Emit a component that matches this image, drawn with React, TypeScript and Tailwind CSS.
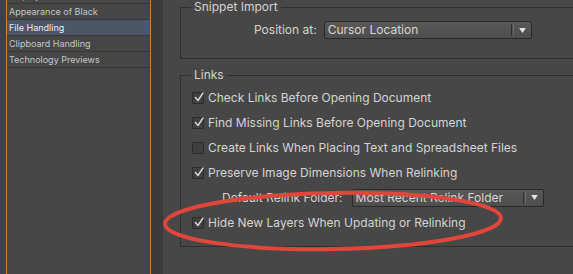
import { ReactElement } from 'react'

const SIDEBAR_ITEMS = [
    { label: 'Display Performance', active: false },
    { label: 'Appearance of Black', active: false },
    { label: 'File Handling', active: true },
    { label: 'Clipboard Handling', active: false },
    { label: 'Technology Previews', active: false },
]

const LINK_OPTIONS = [
    { label: 'Check Links Before Opening Document', checked: true },
    { label: 'Find Missing Links Before Opening Document', checked: true },
    { label: 'Create Links When Placing Text and Spreadsheet Files', checked: false },
    { label: 'Preserve Image Dimensions When Relinking', checked: true },
]

function Checkbox({ checked }: { checked: boolean }): ReactElement {
    return (
        <span className="relative flex h-[12px] w-[12px] shrink-0 rounded-[1px] border border-[#2c2c2c] bg-[#3f3f3f]">
            {checked && (
                <svg viewBox="0 0 12 12" className="absolute -top-[2px] left-[0px] h-[12px] w-[12px]">
                    <path d="M2.5 6.5 L5 9.5 L10 2" fill="none" stroke="#d6d6d6" strokeWidth="1.5" strokeLinecap="round" strokeLinejoin="round" />
                </svg>
            )}
        </span>
    )
}

function Dropdown({ value, width }: { value: string; width: string }): ReactElement {
    return (
        <div className={`flex h-[18px] items-center rounded-[2px] border border-[#2a2a2a] bg-gradient-to-b from-[#585858] to-[#4e4e4e] ${width}`}>
            <span className="flex-1 whitespace-nowrap pl-[3px] text-[12px] leading-[16px] text-[#d6d6d6]">{value}</span>
            <span className="h-[12px] w-[1px] bg-[#2e2e2e]" />
            <span className="ml-[1px] h-[12px] w-[1px] bg-[#6a6a6a]" />
            <svg viewBox="0 0 8 6" className="mx-[5px] h-[5px] w-[7px]">
                <path d="M0 0 L8 0 L4 6 Z" fill="#e6e6e6" />
            </svg>
        </div>
    )
}

export default function App(): ReactElement {
    return (
        <div className="relative flex h-[274px] w-[573px] overflow-hidden bg-[#474747] font-['Inter',sans-serif]">
            <div className="w-[6px] shrink-0 bg-[#414141]" />
            <div className="w-[145px] shrink-0 overflow-hidden border-x border-[#c8823a] bg-[#464646]">
                <ul className="-mt-[12px]">
                    {SIDEBAR_ITEMS.map((item) => (
                        <li
                            key={item.label}
                            className={`flex h-[16px] items-center border-b border-[#373737] pl-[2px] text-[9px] ${
                                item.active ? 'bg-[#4b5667] text-[#ececec]' : 'text-[#c6c6c6]'
                            }`}
                        >
                            {item.label}
                        </li>
                    ))}
                </ul>
            </div>
            <div className="w-[12px] shrink-0 bg-[#3a3a3a]" />

            <main className="flex-1 overflow-hidden pl-[17px] text-[12px] text-[#d4d4d4]">
                <fieldset className="-mt-[1px] w-[440px] border border-[#2f2f2f] pb-[19px]">
                    <legend className="ml-[10px] px-[3px] leading-[16px]">Snippet Import</legend>
                    <div className="ml-[73px] mt-[6px] flex items-center gap-[7px]">
                        <span>Position at:</span>
                        <Dropdown value="Cursor Location" width="w-[208px]" />
                    </div>
                </fieldset>

                <fieldset className="mt-[8px] w-[440px] border border-[#2f2f2f] pb-[11px] pt-[2px]">
                    <legend className="ml-[10px] px-[3px] leading-[16px]">Links</legend>
                    {LINK_OPTIONS.map((option) => (
                        <label key={option.label} className="flex h-[25px] items-center gap-[4px] pl-[11px]">
                            <Checkbox checked={option.checked} />
                            <span className="whitespace-nowrap">{option.label}</span>
                        </label>
                    ))}
                    <div className="flex h-[25px] items-center gap-[9px] pl-[41px]">
                        <span className="whitespace-nowrap">Default Relink Folder:</span>
                        <Dropdown value="Most Recent Relink Folder" width="w-[192px]" />
                    </div>
                    <label className="flex h-[25px] items-center gap-[4px] pl-[11px]">
                        <Checkbox checked />
                        <span className="whitespace-nowrap">Hide New Layers When Updating or Relinking</span>
                    </label>
                </fieldset>
            </main>

            {/* red annotation ellipse drawn over the dialog */}
            <svg className="pointer-events-none absolute left-0 top-0" width="573" height="274">
                <ellipse cx="333" cy="221" rx="168" ry="28" fill="none" stroke="#e0473a" strokeWidth="4" transform="rotate(-1 333 221)" />
            </svg>
        </div>
    )
}
